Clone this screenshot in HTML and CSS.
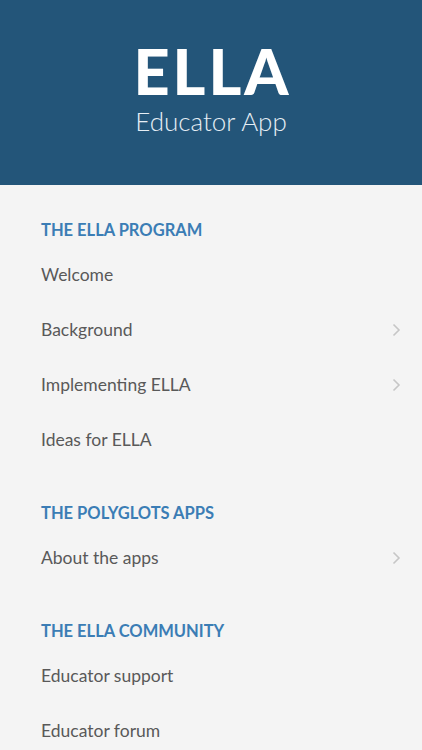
FILE: index.html
```html
<!DOCTYPE html>
<html lang="en">
<head>
<meta charset="utf-8">
<title>ELLA Educator App</title>
<link rel="stylesheet" href="styles.css">
</head>
<body>
<header class="hero">
  <h1 class="logo">ELLA</h1>
  <p class="subtitle">Educator App</p>
</header>
<nav class="menu">
  <section class="group">
    <h2 class="group-title">THE ELLA PROGRAM</h2>
    <a class="item">Welcome</a>
    <a class="item">Background<span class="chev"><svg width="9" height="14" viewBox="0 0 9 14"><path d="M1.5 1.5 L7 7 L1.5 12.5" fill="none" stroke="#c6c6c6" stroke-width="1.6"/></svg></span></a>
    <a class="item">Implementing ELLA<span class="chev"><svg width="9" height="14" viewBox="0 0 9 14"><path d="M1.5 1.5 L7 7 L1.5 12.5" fill="none" stroke="#c6c6c6" stroke-width="1.6"/></svg></span></a>
    <a class="item">Ideas for ELLA</a>
  </section>
  <section class="group">
    <h2 class="group-title">THE POLYGLOTS APPS</h2>
    <a class="item">About the apps<span class="chev"><svg width="9" height="14" viewBox="0 0 9 14"><path d="M1.5 1.5 L7 7 L1.5 12.5" fill="none" stroke="#c6c6c6" stroke-width="1.6"/></svg></span></a>
  </section>
  <section class="group">
    <h2 class="group-title">THE ELLA COMMUNITY</h2>
    <a class="item">Educator support</a>
    <a class="item">Educator forum</a>
  </section>
</nav>
</body>
</html>
```
FILE: styles.css
```css
html, body {
  margin: 0;
  padding: 0;
}
body {
  background: #f4f4f4;
  font-family: "Lato", "Open Sans", sans-serif;
  width: 422px;
  height: 750px;
  overflow: hidden;
}
.hero {
  height: 185px;
  background: #235579;
  color: #fff;
  display: flex;
  flex-direction: column;
  align-items: center;
  box-sizing: border-box;
  padding-top: 36px;
}
.logo {
  margin: 0;
  font-size: 63px;
  font-weight: 900;
  line-height: 70px;
  letter-spacing: 3px;
  padding-left: 3px;
}
.subtitle {
  margin: 0;
  font-size: 26px;
  font-weight: 300;
  line-height: 30px;
  color: #e6eef5;
}
.menu {
  padding-top: 27px;
}
.group {
  display: flex;
  flex-direction: column;
}
.group + .group {
  margin-top: 28px;
}
.group-title {
  margin: 0;
  height: 35px;
  display: flex;
  align-items: center;
  padding-left: 41px;
  font-size: 16.5px;
  font-weight: 700;
  color: #3b7db5;
}
.item {
  height: 55px;
  display: flex;
  align-items: center;
  justify-content: space-between;
  padding: 0 21px 0 41px;
  font-size: 17.5px;
  color: #595959;
}
.chev {
  display: flex;
}
```
